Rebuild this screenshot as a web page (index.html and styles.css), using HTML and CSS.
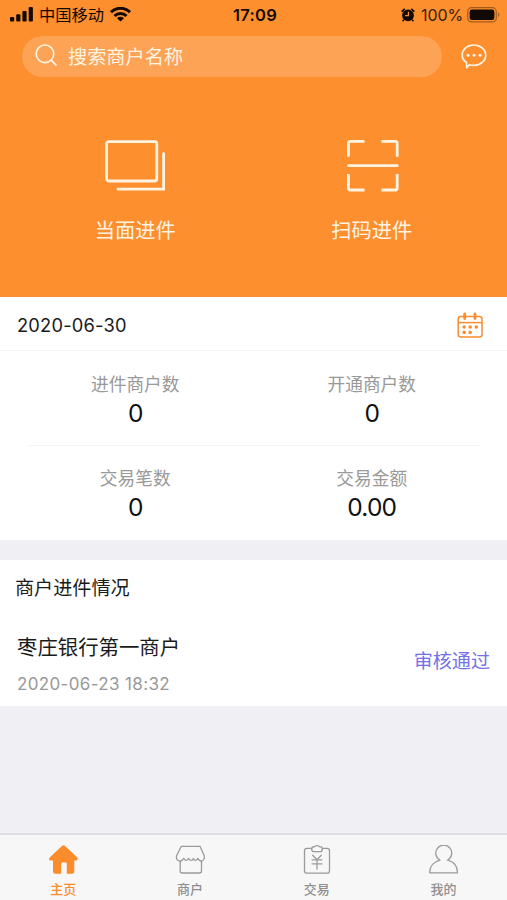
FILE: index.html
```html
<!DOCTYPE html>
<html lang="zh-CN">
<head>
    <meta charset="UTF-8">
    <meta name="viewport" content="width=device-width, initial-scale=1.0">
    <title>主页</title>
    <link rel="stylesheet" href="styles.css">
</head>
<body>

<div class="header">
    <!-- Status bar -->
    <div class="status">
        <div class="status-left">
            <svg class="signal" width="24" height="15" viewBox="0 0 24 15">
                <rect x="0" y="10" width="4.200" height="4.500" rx="1"/>
                <rect x="6.200" y="7.200" width="4.200" height="7.300" rx="1"/>
                <rect x="12.400" y="4" width="4.200" height="10.500" rx="1"/>
                <rect x="18.700" y="0" width="4.200" height="14.500" rx="1"/>
            </svg>
            <span class="carrier">中国移动</span>
            <svg class="wifi" width="21" height="15" viewBox="0 0 21 15">
                <g fill="none" stroke="#120a02" stroke-width="3">
                    <path d="M1 5.200a13.400 13.400 0 0 1 19 0"/>
                    <path d="M4.500 9a8.400 8.400 0 0 1 12 0"/>
                </g>
                <path d="M10.500 14.600L7 11.300a5 5 0 0 1 7 0z"/>
            </svg>
        </div>
        <span class="time">17:09</span>
        <div class="status-right">
            <svg class="alarm" width="14" height="14" viewBox="0 0 14 14">
                <circle cx="7" cy="7.300" r="5.900"/>
                <path d="M0.600 3.600L3.800 0.800M13.400 3.600L10.200 0.800M2.800 11.800L1.600 13.300M11.200 11.800l1.200 1.500" stroke="#120a02" stroke-width="1.600"/>
                <path d="M7.400 3.800v3.800H4.200" fill="none" stroke="#fd8f2f" stroke-width="1.200"/>
            </svg>
            <span class="percent">100%</span>
            <svg class="battery" width="33" height="16" viewBox="0 0 33 16">
                <rect x="0.700" y="0.700" width="28.600" height="14.200" rx="4" fill="none" stroke="#a35c1e" stroke-width="1.200"/>
                <rect x="2.600" y="2.600" width="24.800" height="10.400" rx="2.300"/>
                <path d="M31 5.500c1.900 0.800 1.900 3.800 0 4.600z" fill="#a35c1e"/>
            </svg>
        </div>
    </div>

    <!-- Search -->
    <div class="search-row">
        <div class="search">
            <svg width="24" height="24" viewBox="0 0 24 24" fill="none" stroke="#fff3e2" stroke-width="1.700" stroke-linecap="round">
                <circle cx="10" cy="9.800" r="8.800"/>
                <path d="M16.400 16.300l4.600 4.800"/>
            </svg>
            <span>搜索商户名称</span>
        </div>
        <svg class="message" width="26" height="26" viewBox="0 0 26 26">
            <path d="M5.300 18.200C2.700 16.500 1.200 14 1.200 11.200 1.200 5.500 6.300 1 12.800 1s11.900 4.500 11.900 10.200-5.300 10.200-11.900 10.200c-1.500 0-3-.2-4.300-.7L5.800 23.800z" fill="none" stroke="#fff3e2" stroke-width="1.700" stroke-linejoin="round"/>
            <g fill="#fff3e2">
                <circle cx="7" cy="11.200" r="1.500"/>
                <circle cx="13" cy="11.200" r="1.500"/>
                <circle cx="19" cy="11.200" r="1.500"/>
            </g>
        </svg>
    </div>

    <!-- Entries -->
    <div class="entries">
        <div class="entry">
            <svg width="62" height="54" viewBox="0 0 62 54" fill="none" stroke="#fff3e2" stroke-width="2.800" stroke-linecap="round">
                <rect x="2.600" y="2.600" width="50.200" height="39.400" rx="2.200"/>
                <path d="M59.600 14.600v35.500H14"/>
            </svg>
            <span>当面进件</span>
        </div>
        <div class="entry">
            <svg width="54" height="54" viewBox="0 0 54 54" fill="none" stroke="#fff3e2" stroke-width="2.800">
                <path d="M3.400 17.700V4.400Q3.400 2.400 5.400 2.400H19.500M36.500 2.400H50.200Q52.200 2.400 52.200 4.400V17.700M3.400 35V49Q3.400 51 5.400 51H19.500M36.500 51H50.200Q52.200 51 52.200 49V35M2.400 26.600H53.400"/>
            </svg>
            <span>扫码进件</span>
        </div>
    </div>
</div>

<!-- Statistics -->
<div class="stats">
    <div class="date-row">
        <span>2020-06-30</span>
        <svg width="26" height="26" viewBox="0 0 26 26" fill="none" stroke="#f98d30" stroke-width="1.500">
            <rect x="1.200" y="4.400" width="23.800" height="20.600" rx="2.500"/>
            <path d="M1.200 10.600h23.800"/>
            <path d="M7.700 2v4.600M18 2v4.600" stroke-width="2.800" stroke-linecap="round"/>
            <g fill="#f98d30" stroke="none">
                <circle cx="7.200" cy="15" r="1.800"/>
                <circle cx="13.200" cy="15" r="1.800"/>
                <circle cx="19.300" cy="15" r="1.800"/>
                <circle cx="7.200" cy="20.400" r="1.800"/>
                <circle cx="13.200" cy="20.400" r="1.800"/>
            </g>
        </svg>
    </div>
    <div class="stat-row">
        <div class="stat"><span>进件商户数</span><b>0</b></div>
        <div class="stat"><span>开通商户数</span><b>0</b></div>
    </div>
    <div class="line"></div>
    <div class="stat-row">
        <div class="stat"><span>交易笔数</span><b>0</b></div>
        <div class="stat"><span>交易金额</span><b>0.00</b></div>
    </div>
</div>

<!-- Merchants -->
<div class="merchants">
    <div class="title">商户进件情况</div>
    <div class="merchant">
        <div class="info">
            <div class="name">枣庄银行第一商户</div>
            <div class="when">2020-06-23 18:32</div>
        </div>
        <span class="state">审核通过</span>
    </div>
</div>

<!-- Tab bar -->
<div class="tabs">
    <div class="tab active">
        <svg width="30" height="30" viewBox="0 0 30 30">
            <path d="M14.200 0.700Q15.500 -.2 16.800 0.700L29.500 12.800Q30.200 15.400 28.500 15.600H26.300V26.500Q26.300 28.800 24 28.800H18.800V18.800Q18.800 17.600 17.600 17.600H14.400Q13.200 17.600 13.200 18.800V28.800H7.300Q5 28.800 5 26.500V15.600H2.500Q.3 15.200 1.500 12.800z"/>
        </svg>
        <span>主页</span>
    </div>
    <div class="tab">
        <svg width="30" height="30" viewBox="0 0 30 30" fill="none" stroke="#9b9b9b" stroke-width="1.300" stroke-linejoin="round">
            <path d="M6.300 1.300H25L29.300 11C29.800 13.700 28.300 16 26.300 16 24.500 16 23.500 15 22.800 13.300 22 16 19.100 16 18.400 13.300 17.700 16 14.300 16 13.500 13.300 12.700 16 9.700 16 8.800 13.300 7.900 15.200 6.800 16 5 16 2.500 16 1 13.700 1.500 11z"/>
            <path d="M5.200 16V26Q5.200 28 7.200 28H24.500Q26.500 28 26.500 26V16"/>
        </svg>
        <span>商户</span>
    </div>
    <div class="tab">
        <svg width="30" height="30" viewBox="0 0 30 30" fill="none" stroke="#9b9b9b" stroke-width="1.300" stroke-linejoin="round" stroke-linecap="round">
            <path d="M9 3.300H5Q2.500 3.300 2.500 5.800V25.700Q2.500 28.200 5 28.200H25Q27.500 28.200 27.500 25.700V5.800Q27.500 3.300 25 3.300H21"/>
            <path d="M10.500 1.900H12.300Q13 .7 15 .7T17.700 1.900H19.500Q21.300 4.200 19.300 6.700H10.700Q8.700 4.200 10.500 1.900z"/>
            <path d="M10.700 10.300L15 14.800 19.300 10.300M10 14.800H20M10 18.800H20M15 14.800V24"/>
        </svg>
        <span>交易</span>
    </div>
    <div class="tab">
        <svg width="30" height="30" viewBox="0 0 30 30" fill="none" stroke="#9b9b9b" stroke-width="1.300" stroke-linejoin="round">
            <path d="M11 15.200A8 8 0 1 1 18.500 15.200C24.300 16.600 28.500 21 28.500 27.800H.7C.7 21 5.300 16.600 11 15.200z"/>
        </svg>
        <span>我的</span>
    </div>
</div>

</body>
</html>
```
FILE: styles.css
```css
* {
    box-sizing: border-box;
}
body {
    font-family: Inter, "Noto Sans CJK SC", sans-serif;
    background-color: #f0eff4;
    color: #1b1b1b;
    margin: 0;
    height: 900px;
    display: flex;
    flex-direction: column;
}
svg {
    display: block;
    flex: none;
}
.header {
    height: 297px;
    background-color: #fd8f2f;
    color: #fff3e2;
}
.status {
    height: 36px;
    padding: 0 7px 7px 10px;
    display: grid;
    grid-template-columns: 1fr auto 1fr;
    align-items: center;
    color: #120a02;
    fill: #120a02;
    font-size: 16px;
    line-height: 24px;
}
.status-left,
.status-right {
    display: flex;
    align-items: center;
}
.status-right {
    justify-content: flex-end;
}
.carrier {
    margin: 0 6px 0 5px;
    font-size: 16.3px;
}
.time {
    font-weight: 600;
    font-size: 16.5px;
    letter-spacing: 0.3px;
}
.percent {
    margin: 0 4px 0 6px;
    color: #3b2009;
    letter-spacing: -0.1px;
}
.search-row {
    padding: 0 20px 0 22px;
    display: flex;
    align-items: center;
    justify-content: space-between;
}
.search {
    width: 420px;
    height: 41px;
    padding: 0 13px 1px;
    display: flex;
    align-items: center;
    gap: 9px;
    border-radius: 21px;
    background-color: #fda356;
    font-size: 19.2px;
}
.entries {
    padding: 62px 17px 0;
    display: flex;
}
.entry {
    flex: 1;
    display: flex;
    flex-direction: column;
    align-items: center;
    gap: 23px;
    font-size: 20.3px;
    line-height: 30px;
}
.stats {
    height: 243px;
    background-color: #fff;
}
.date-row {
    height: 54px;
    padding: 2px 24px 0 17px;
    display: flex;
    align-items: center;
    justify-content: space-between;
    border-bottom: 1px solid #f4f4f5;
    font-size: 18.3px;
    letter-spacing: 0.2px;
}
.stat-row {
    height: 94px;
    padding: 21px 17px 0;
    display: flex;
}
.stat {
    flex: 1;
    display: flex;
    flex-direction: column;
    align-items: center;
}
.stat span {
    color: #999;
    font-size: 17.7px;
    line-height: 26px;
}
.stat b {
    color: #111;
    font-size: 24.5px;
    font-weight: 400;
    line-height: 30px;
    letter-spacing: -0.8px;
}
.line {
    height: 1px;
    margin: 0 27px -1px 28px;
    background-color: #f4f4f5;
}
.merchants {
    height: 146px;
    margin-top: 20px;
    padding: 14px 17px 0 15px;
    background-color: #fff;
}
.title {
    font-size: 19.1px;
    line-height: 29px;
}
.merchant {
    margin-top: 28px;
    padding-left: 2px;
    display: flex;
    align-items: center;
    justify-content: space-between;
}
.name {
    font-size: 20.4px;
    line-height: 34px;
}
.when {
    margin-top: 6px;
    color: #999;
    font-size: 17px;
    line-height: 26px;
    letter-spacing: 0.35px;
}
.state {
    margin-bottom: 8px;
    color: #7470e8;
    font-size: 19.1px;
}
.tabs {
    height: 67px;
    margin-top: auto;
    padding-top: 10px;
    display: flex;
    border-top: 2px solid #dfdee2;
    background-color: #f7f7f7;
}
.tab {
    flex: 1;
    display: flex;
    flex-direction: column;
    align-items: center;
    gap: 4px;
    color: #8f8f8f;
    font-size: 13px;
    font-weight: 500;
    line-height: 20px;
}
.active {
    color: #fb8c2c;
    fill: #fb8c2c;
}
```
